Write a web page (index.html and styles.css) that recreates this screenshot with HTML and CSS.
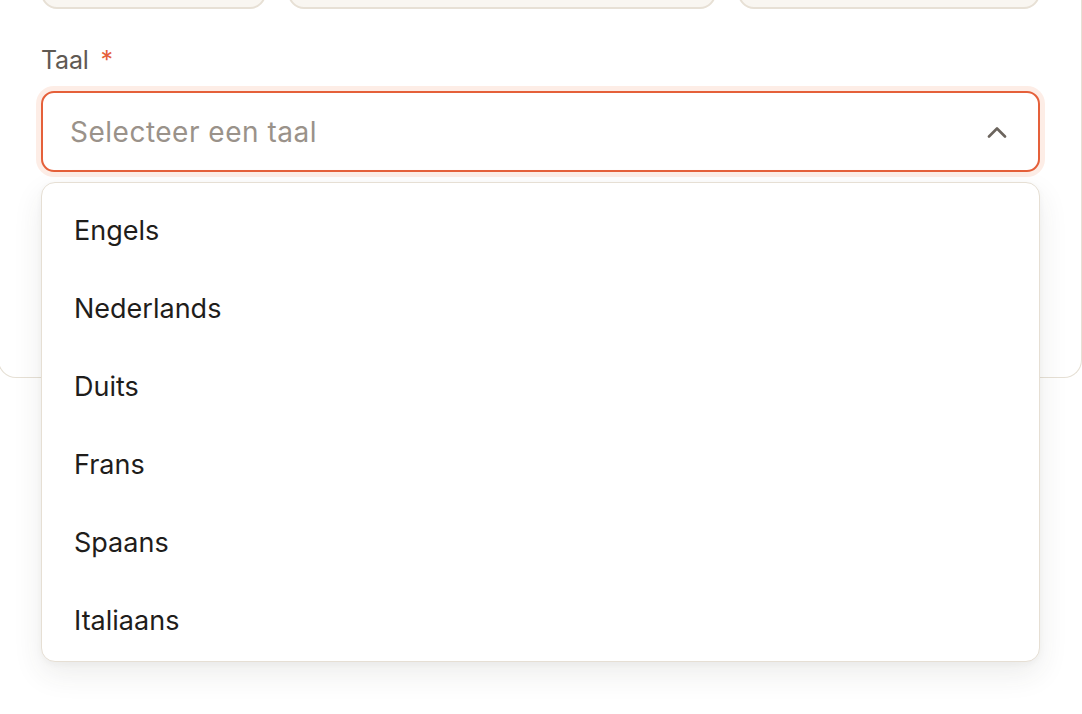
FILE: index.html
```html
<!DOCTYPE html>
<html lang="nl">
<head>
<meta charset="utf-8">
<title>Taal</title>
<link rel="stylesheet" href="styles.css">
</head>
<body>
<div class="card">
  <div class="tiles">
    <div class="tile t1"></div>
    <div class="tile t2"></div>
    <div class="tile t3"></div>
  </div>
  <div class="field">
    <div class="label">Taal <span class="req">*</span></div>
    <div class="select-wrap">
      <div class="select">
        <span class="placeholder">Selecteer een taal</span>
        <svg class="chev" width="20" height="12" viewBox="0 0 20 12" aria-hidden="true">
          <path d="M2 10.5 L10 2.5 L18 10.5" fill="none" stroke="#6b645d" stroke-width="2.6" stroke-linecap="round" stroke-linejoin="round"/>
        </svg>
      </div>
      <ul class="menu">
        <li class="opt">Engels</li>
        <li class="opt">Nederlands</li>
        <li class="opt">Duits</li>
        <li class="opt">Frans</li>
        <li class="opt">Spaans</li>
        <li class="opt">Italiaans</li>
      </ul>
    </div>
  </div>
</div>
</body>
</html>
```

FILE: styles.css
```css
html {
  height: 100%;
}

body {
  margin: 0;
  padding: 0;
  min-height: 100%;
  background: #ffffff;
  font-family: Inter, "Noto Sans", "Liberation Sans", sans-serif;
}

.card {
  display: flow-root;
  box-sizing: border-box;
  width: calc(100% + 2px);
  margin-left: -2px;
  height: 378px;
  border: 1.5px solid #e6e0d5;
  border-top: none;
  border-radius: 0 0 18px 18px;
  padding: 0 41px 0 42px;
}

.tiles {
  display: grid;
  grid-template-columns: 225px 428px 1fr;
  column-gap: 22px;
  margin-top: -49px;
}

.tile {
  height: 58px;
  box-sizing: border-box;
  background: #f9f6f1;
  border: 2px solid #e7e0d5;
  border-radius: 16px;
}

.field {
  margin-top: 35px;
}

.label {
  font-size: 25px;
  line-height: 33px;
  color: #5f5953;
  letter-spacing: -0.2px;
}

.req {
  color: #e5603a;
  margin-left: 5px;
}

.select-wrap {
  position: relative;
  margin-top: 14px;
}

.select {
  box-sizing: border-box;
  height: 81px;
  border: 2px solid #e5603a;
  border-radius: 13px;
  box-shadow: 0 0 0 5px #fdede6;
  display: flex;
  align-items: center;
  justify-content: space-between;
  padding: 1px 31px 0 27px;
  background: #fff;
}

.placeholder {
  font-size: 28px;
  color: #9a928a;
  letter-spacing: 0.5px;
}

.chev {
  display: block;
}

.menu {
  position: absolute;
  z-index: 5;
  left: 0;
  right: 0;
  top: calc(100% + 10px);
  margin: 0;
  padding: 5px 0;
  list-style: none;
  background: #fff;
  border: 1.5px solid #e6dfd4;
  border-radius: 14px;
  box-shadow: 0 12px 30px rgba(60, 50, 40, 0.09), 0 2px 6px rgba(60, 50, 40, 0.04);
}

.opt {
  box-sizing: border-box;
  height: 78px;
  display: flex;
  align-items: center;
  padding: 7px 0 0 32px;
  font-size: 27px;
  color: #1f1d1b;
  letter-spacing: 0;
}
```
